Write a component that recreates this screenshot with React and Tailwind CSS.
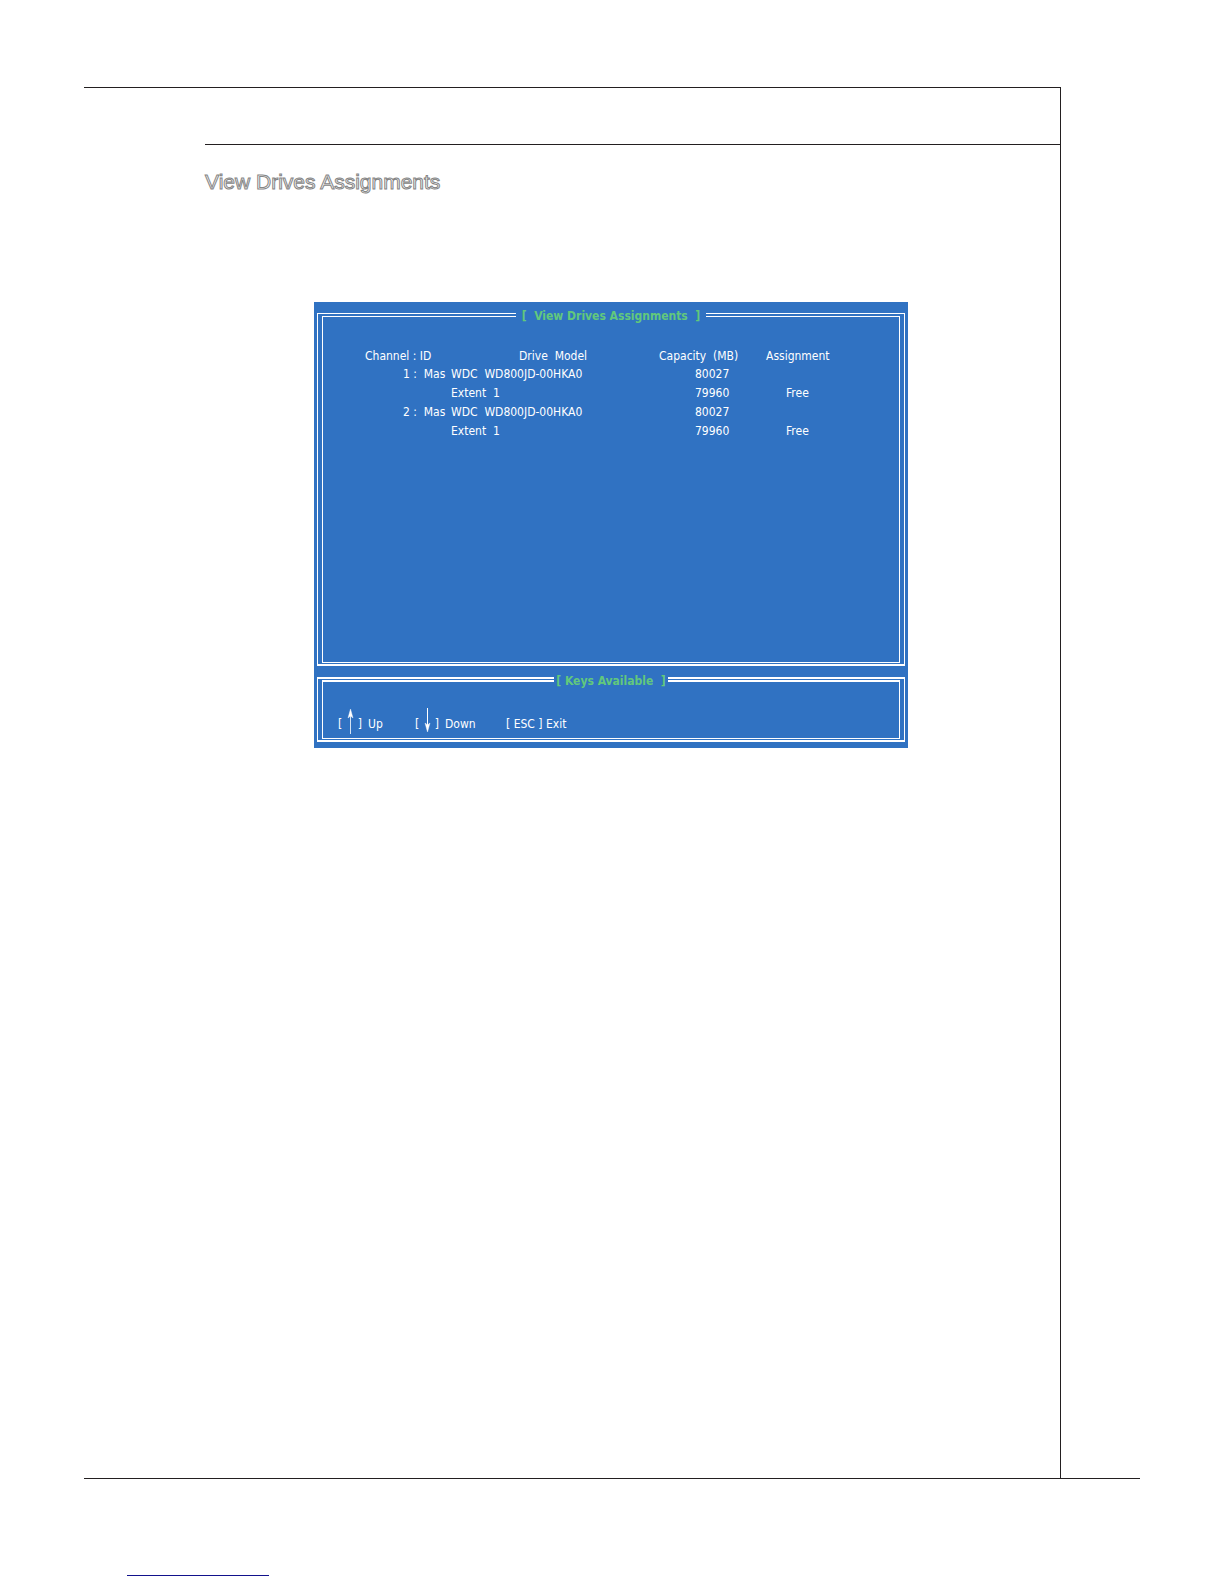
const drives = [
  { id: "1 :  Mas", model: "WDC  WD800JD-00HKA0", capacity: "80027", free: "79960" },
  { id: "2 :  Mas", model: "WDC  WD800JD-00HKA0", capacity: "80027", free: "79960" },
];

function Title({ children, className }) {
  return (
    <h2
      className={`absolute left-1/2 -translate-x-1/2 flex justify-center bg-[#3072c2] text-[12px] leading-4 font-bold whitespace-pre text-[#62c87c] ${className}`}
    >
      {children}
    </h2>
  );
}

function Arrow({ down }) {
  return (
    <svg width="9" height="26" viewBox="0 0 9 26" fill="none" stroke="white" aria-hidden="true">
      {down ? (
        <>
          <path d="M4.5 0V20" strokeWidth="1" />
          <path d="M2 15L4.5 24L7 15L4.5 17Z" fill="white" strokeWidth="0.4" />
        </>
      ) : (
        <>
          <path d="M4.5 5V26" strokeWidth="1" opacity="0.8" />
          <path d="M2 10L4.5 1L7 10L4.5 8Z" fill="white" strokeWidth="0.4" />
        </>
      )}
    </svg>
  );
}

function Key({ children, label, className }) {
  return (
    <li className={`flex items-end ${className}`}>
      <span className="flex w-6 items-end justify-between">
        <span>[</span>
        {children}
        <span>]</span>
      </span>
      <span className="ml-[6px]">{label}</span>
    </li>
  );
}

export default function App() {
  return (
    <main className="bg-white pt-[87px] pr-[84px] pb-2 pl-[84px] font-['Liberation_Sans',Arial,sans-serif]">
      <section className="mr-[79px] min-h-[1391px] border-t border-r border-[#231f20] pl-[121px]">
        <div className="h-[57px] border-b border-[#231f20]" />
        <h1 className="mt-[23px] text-[21px] leading-7 text-white [-webkit-text-stroke:1px_#858585]">
          View Drives Assignments
        </h1>

        <div className="mt-[106px] ml-[109px] max-w-[594px] bg-[#3072c2] px-[3px] pt-[11px] pb-[6px] font-['DejaVu_Sans_Condensed','Noto_Sans',sans-serif] text-[12px] text-white">
          <div className="relative border border-b-2 border-white px-1 pt-[2px] pb-px">
            <Title className="-top-[6px] w-[190px]">{"[  View Drives Assignments  ]"}</Title>
            <div className="min-h-[347px] border border-white pt-[30px] pl-[42px]">
              <table className="w-full table-fixed text-left leading-[19px] whitespace-pre">
                <colgroup>
                  <col className="w-[86px]" />
                  <col className="w-[208px]" />
                  <col className="w-[107px]" />
                  <col />
                </colgroup>
                <thead className="leading-[18px]">
                  <tr>
                    <th className="p-0 font-normal">Channel : ID</th>
                    <th className="p-0 pl-[68px] font-normal">Drive  Model</th>
                    <th className="p-0 font-normal">Capacity  (MB)</th>
                    <th className="p-0 font-normal">Assignment</th>
                  </tr>
                </thead>
                {drives.map((d) => (
                  <tbody key={d.id}>
                    <tr>
                      <td className="p-0 pl-[38px]">{d.id}</td>
                      <td className="p-0">{d.model}</td>
                      <td className="p-0 pl-[36px]">{d.capacity}</td>
                      <td className="p-0" />
                    </tr>
                    <tr>
                      <td className="p-0" />
                      <td className="p-0">Extent  1</td>
                      <td className="p-0 pl-[36px]">{d.free}</td>
                      <td className="p-0 pl-5">Free</td>
                    </tr>
                  </tbody>
                ))}
              </table>
            </div>
          </div>

          <div className="relative mt-[11px] border border-y-2 border-white px-1 pt-px pb-px">
            <Title className="-top-[6px] w-[114px]">{"[ Keys Available  ]"}</Title>
            <div className="min-h-[59px] border border-t-2 border-white pt-[26px] pl-[15px]">
              <ul className="flex items-end leading-5">
                <Key label="Up" className="w-[77px]">
                  <Arrow />
                </Key>
                <Key label="Down" className="w-[91px]">
                  <Arrow down />
                </Key>
                <li>[ ESC ] Exit</li>
              </ul>
            </div>
          </div>
        </div>
      </section>
      <footer className="border-t border-[#231f20]">
        <div className="mt-24 ml-[43px] h-px w-[142px] bg-[#12128c]" />
      </footer>
    </main>
  );
}
